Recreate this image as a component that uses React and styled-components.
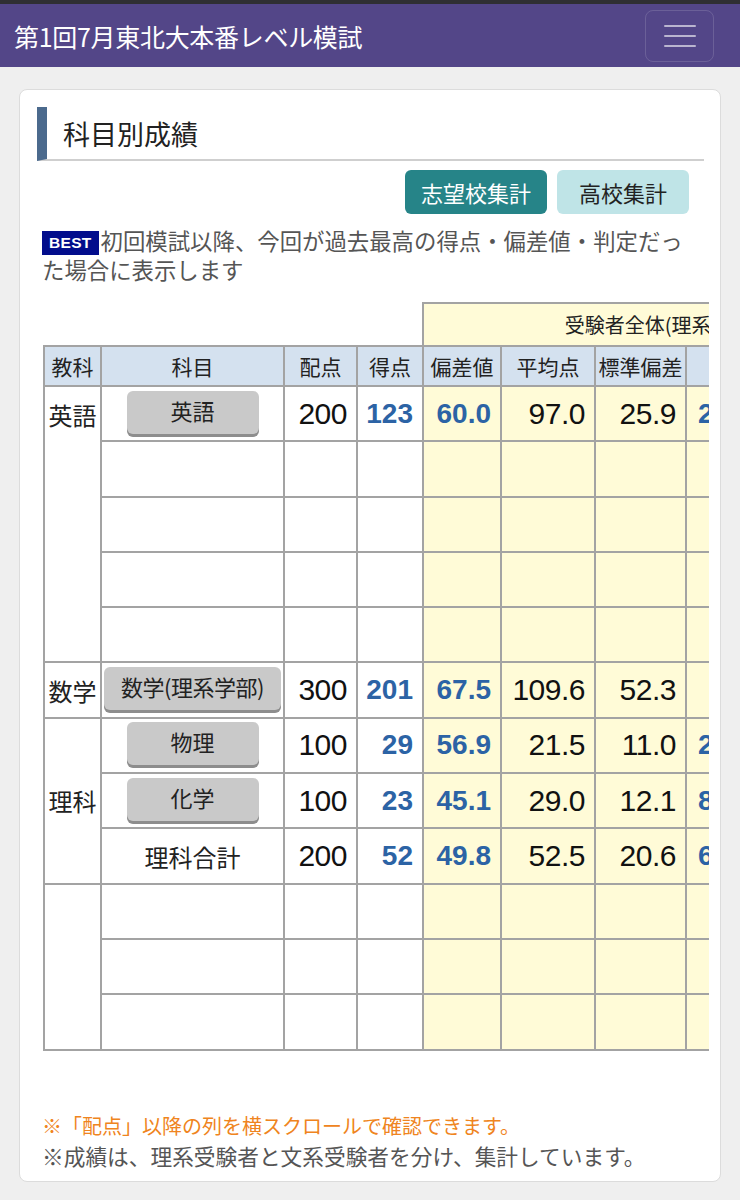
import React from 'react';
import styled, { createGlobalStyle } from 'styled-components';

const GlobalStyle = createGlobalStyle`
  body {
    margin: 0;
    background: #efefef;
    font-family: "Noto Sans CJK JP", "Noto Sans", sans-serif;
    color: #222;
  }
`;

const NUM_FONT = '"Liberation Sans", Arial, sans-serif';

const columns = [57, 183, 73, 66, 78, 94, 91, 92, 80, 62];

const rows = [
  { kyoka: '英語', span: 5, subject: '英語', button: true, max: '200', score: '123', dev: '60.0', avg: '97.0', sd: '25.9', rank: '2,318' },
  { blank: true },
  { blank: true },
  { blank: true },
  { blank: true },
  { kyoka: '数学', span: 1, subject: '数学(理系学部)', button: true, wide: true, max: '300', score: '201', dev: '67.5', avg: '109.6', sd: '52.3', rank: '964' },
  { kyoka: '理科', span: 3, middle: true, subject: '物理', button: true, max: '100', score: '29', dev: '56.9', avg: '21.5', sd: '11.0', rank: '2,077' },
  { subject: '化学', button: true, max: '100', score: '23', dev: '45.1', avg: '29.0', sd: '12.1', rank: '8,451' },
  { subject: '理科合計', max: '200', score: '52', dev: '49.8', avg: '52.5', sd: '20.6', rank: '6,230' },
  { kyoka: '', span: 3, blank: true },
  { blank: true },
  { blank: true },
];

const App = () => {
  return (
    <>
      <GlobalStyle />
      <Navbar>
        <Brand>第1回7月東北大本番レベル模試</Brand>
        <Toggler aria-label="menu">
          <TogglerBar />
          <TogglerBar />
          <TogglerBar />
        </Toggler>
      </Navbar>

      <Page>
        <Card>
          <SectionTitle>科目別成績</SectionTitle>

          <ButtonRow>
            <TabButton active>志望校集計</TabButton>
            <TabButton>高校集計</TabButton>
          </ButtonRow>

          <Legend>
            <BestBadge>BEST</BestBadge>初回模試以降、今回が過去最高の得点・偏差値・判定だった場合に表示します
          </Legend>

          <TableScroll>
            <ScoreTable>
              <colgroup>
                {columns.map((w, i) => (
                  <col key={i} style={{ width: w }} />
                ))}
              </colgroup>
              <thead>
                <tr>
                  <EmptyHead colSpan={4} />
                  <GroupHead colSpan={6}>受験者全体(理系受験者)</GroupHead>
                </tr>
                <tr>
                  <HeadCell>教科</HeadCell>
                  <HeadCell>科目</HeadCell>
                  <HeadCell>配点</HeadCell>
                  <HeadCell>得点</HeadCell>
                  <HeadCell>偏差値</HeadCell>
                  <HeadCell>平均点</HeadCell>
                  <HeadCell>標準偏差</HeadCell>
                  <HeadCell>順位</HeadCell>
                  <HeadCell>人数</HeadCell>
                  <HeadCell>判定</HeadCell>
                </tr>
              </thead>
              <tbody>
                {rows.map((r, i) => (
                  <BodyRow key={i}>
                    {r.kyoka !== undefined && (
                      <KyokaCell rowSpan={r.span} middle={r.middle}>
                        {r.kyoka}
                      </KyokaCell>
                    )}
                    <SubjectCell>
                      {r.button ? (
                        <SubjectButton wide={r.wide}>{r.subject}</SubjectButton>
                      ) : (
                        r.subject
                      )}
                    </SubjectCell>
                    <NumCell>{r.max}</NumCell>
                    <NumCell strong>{r.score}</NumCell>
                    <NumCell strong shaded>{r.dev}</NumCell>
                    <NumCell shaded>{r.avg}</NumCell>
                    <NumCell shaded>{r.sd}</NumCell>
                    <NumCell strong shaded>{r.rank}</NumCell>
                    <NumCell shaded />
                    <NumCell shaded />
                  </BodyRow>
                ))}
              </tbody>
            </ScoreTable>
          </TableScroll>

          <Notes>
            <Note warn>※「配点」以降の列を横スクロールで確認できます。</Note>
            <Note>※成績は、理系受験者と文系受験者を分け、集計しています。</Note>
          </Notes>
        </Card>
      </Page>
    </>
  );
};

const Navbar = styled.header`
  height: 63px;
  border-top: 4px solid #2f2f33;
  background: #534688;
  display: flex;
  align-items: center;
  justify-content: space-between;
  padding: 0 26px 0 14px;
`;

const Brand = styled.div`
  color: #fff;
  font-size: 25px;
  letter-spacing: -0.3px;
`;

const Toggler = styled.button`
  width: 69px;
  height: 52px;
  background: transparent;
  border: 1px solid rgba(255, 255, 255, 0.14);
  border-radius: 8px;
  display: flex;
  flex-direction: column;
  align-items: center;
  justify-content: center;
  gap: 8px;
  padding: 0;
`;

const TogglerBar = styled.span`
  width: 32px;
  height: 2px;
  background: rgba(255, 255, 255, 0.6);
  border-radius: 1px;
`;

const Page = styled.main`
  padding: 22px 19px 20px;
`;

const Card = styled.section`
  background: #fff;
  border: 1px solid #dcdcdc;
  border-radius: 8px;
  padding: 17px 0 10px 17px;
`;

const SectionTitle = styled.h2`
  margin: 0 16px 0 0;
  height: 52px;
  display: flex;
  align-items: center;
  border-left: 10px solid #4b6a8d;
  border-bottom: 2px solid #cfcfcf;
  padding-left: 16px;
  font-size: 27px;
  font-weight: 400;
  color: #222;
`;

const ButtonRow = styled.div`
  display: flex;
  justify-content: flex-end;
  gap: 10px;
  margin: 9px 31px 0 0;
`;

const TabButton = styled.button`
  height: 44px;
  min-width: 132px;
  padding: 0 16px;
  border: none;
  border-radius: 6px;
  font-family: inherit;
  font-size: 22px;
  background: ${p => (p.active ? '#268488' : '#bfe4e7')};
  color: ${p => (p.active ? '#fff' : '#222')};
`;

const Legend = styled.p`
  margin: 12px 0 0 5px;
  width: 652px;
  font-size: 22.4px;
  line-height: 29px;
  color: #555;
`;

const BestBadge = styled.span`
  display: inline-block;
  vertical-align: 2px;
  height: 24px;
  line-height: 24px;
  padding: 0 7px;
  margin-right: 2px;
  background: #020d8c;
  color: #fff;
  font-family: ${NUM_FONT};
  font-weight: 700;
  font-size: 15.5px;
  letter-spacing: 0.3px;
`;

const TableScroll = styled.div`
  margin: 18px 0 0 6px;
  width: 666px;
  overflow-x: auto;
  scrollbar-width: none;
  &::-webkit-scrollbar {
    display: none;
  }
`;

const ScoreTable = styled.table`
  border-collapse: collapse;
  table-layout: fixed;
  width: ${columns.reduce((a, b) => a + b, 0)}px;
  font-size: 24px;
`;

const EmptyHead = styled.th`
  border: none;
`;

const GroupHead = styled.th`
  height: 39px;
  border: 2px solid #a3a3a3;
  border-bottom: none;
  background: #fffbd7;
  font-weight: 400;
  font-size: 20px;
  text-align: center;
  color: #222;
`;

const HeadCell = styled.th`
  height: 38px;
  border: 2px solid #a3a3a3;
  background: #d4e1ef;
  font-weight: 400;
  font-size: 21px;
  padding: 0;
  white-space: nowrap;
  overflow: hidden;
  color: #222;
`;

const BodyRow = styled.tr`
  height: 55.3px;
`;

const KyokaCell = styled.td`
  border: 2px solid #a3a3a3;
  background: #fff;
  text-align: center;
  vertical-align: ${p => (p.middle ? 'middle' : 'top')};
  padding: ${p => (p.middle ? '0' : '10px 0 0')};
  white-space: nowrap;
`;

const SubjectCell = styled.td`
  border: 2px solid #a3a3a3;
  text-align: center;
  padding: 0 2px;
  white-space: nowrap;
`;

const SubjectButton = styled.span`
  display: block;
  box-sizing: border-box;
  width: ${p => (p.wide ? '100%' : '132px')};
  margin: 0 auto 3px;
  height: 43px;
  line-height: 38px;
  border-radius: 6px;
  background: #c9c9c9;
  box-shadow: 0 3px 0 #8d8d8d;
  font-size: 22px;
  color: #222;
  letter-spacing: ${p => (p.wide ? '-0.5px' : '0')};
`;

const NumCell = styled.td`
  border: 2px solid #a3a3a3;
  background: ${p => (p.shaded ? '#fffbd7' : '#fff')};
  text-align: right;
  padding: 0 9px 0 0;
  white-space: nowrap;
  overflow: hidden;
  font-family: ${NUM_FONT};
  font-size: ${p => (p.strong ? '28px' : '30px')};
  font-weight: ${p => (p.strong ? 700 : 400)};
  letter-spacing: ${p => (p.strong ? '0' : '-0.5px')};
  color: ${p => (p.strong ? '#2c63a5' : '#111')};
`;

const Notes = styled.div`
  margin: 60px 0 0 5px;
`;

const Note = styled.div`
  font-size: ${p => (p.warn ? '20px' : '21.7px')};
  line-height: 30px;
  color: ${p => (p.warn ? '#ef8420' : '#555')};
`;

export default App;
